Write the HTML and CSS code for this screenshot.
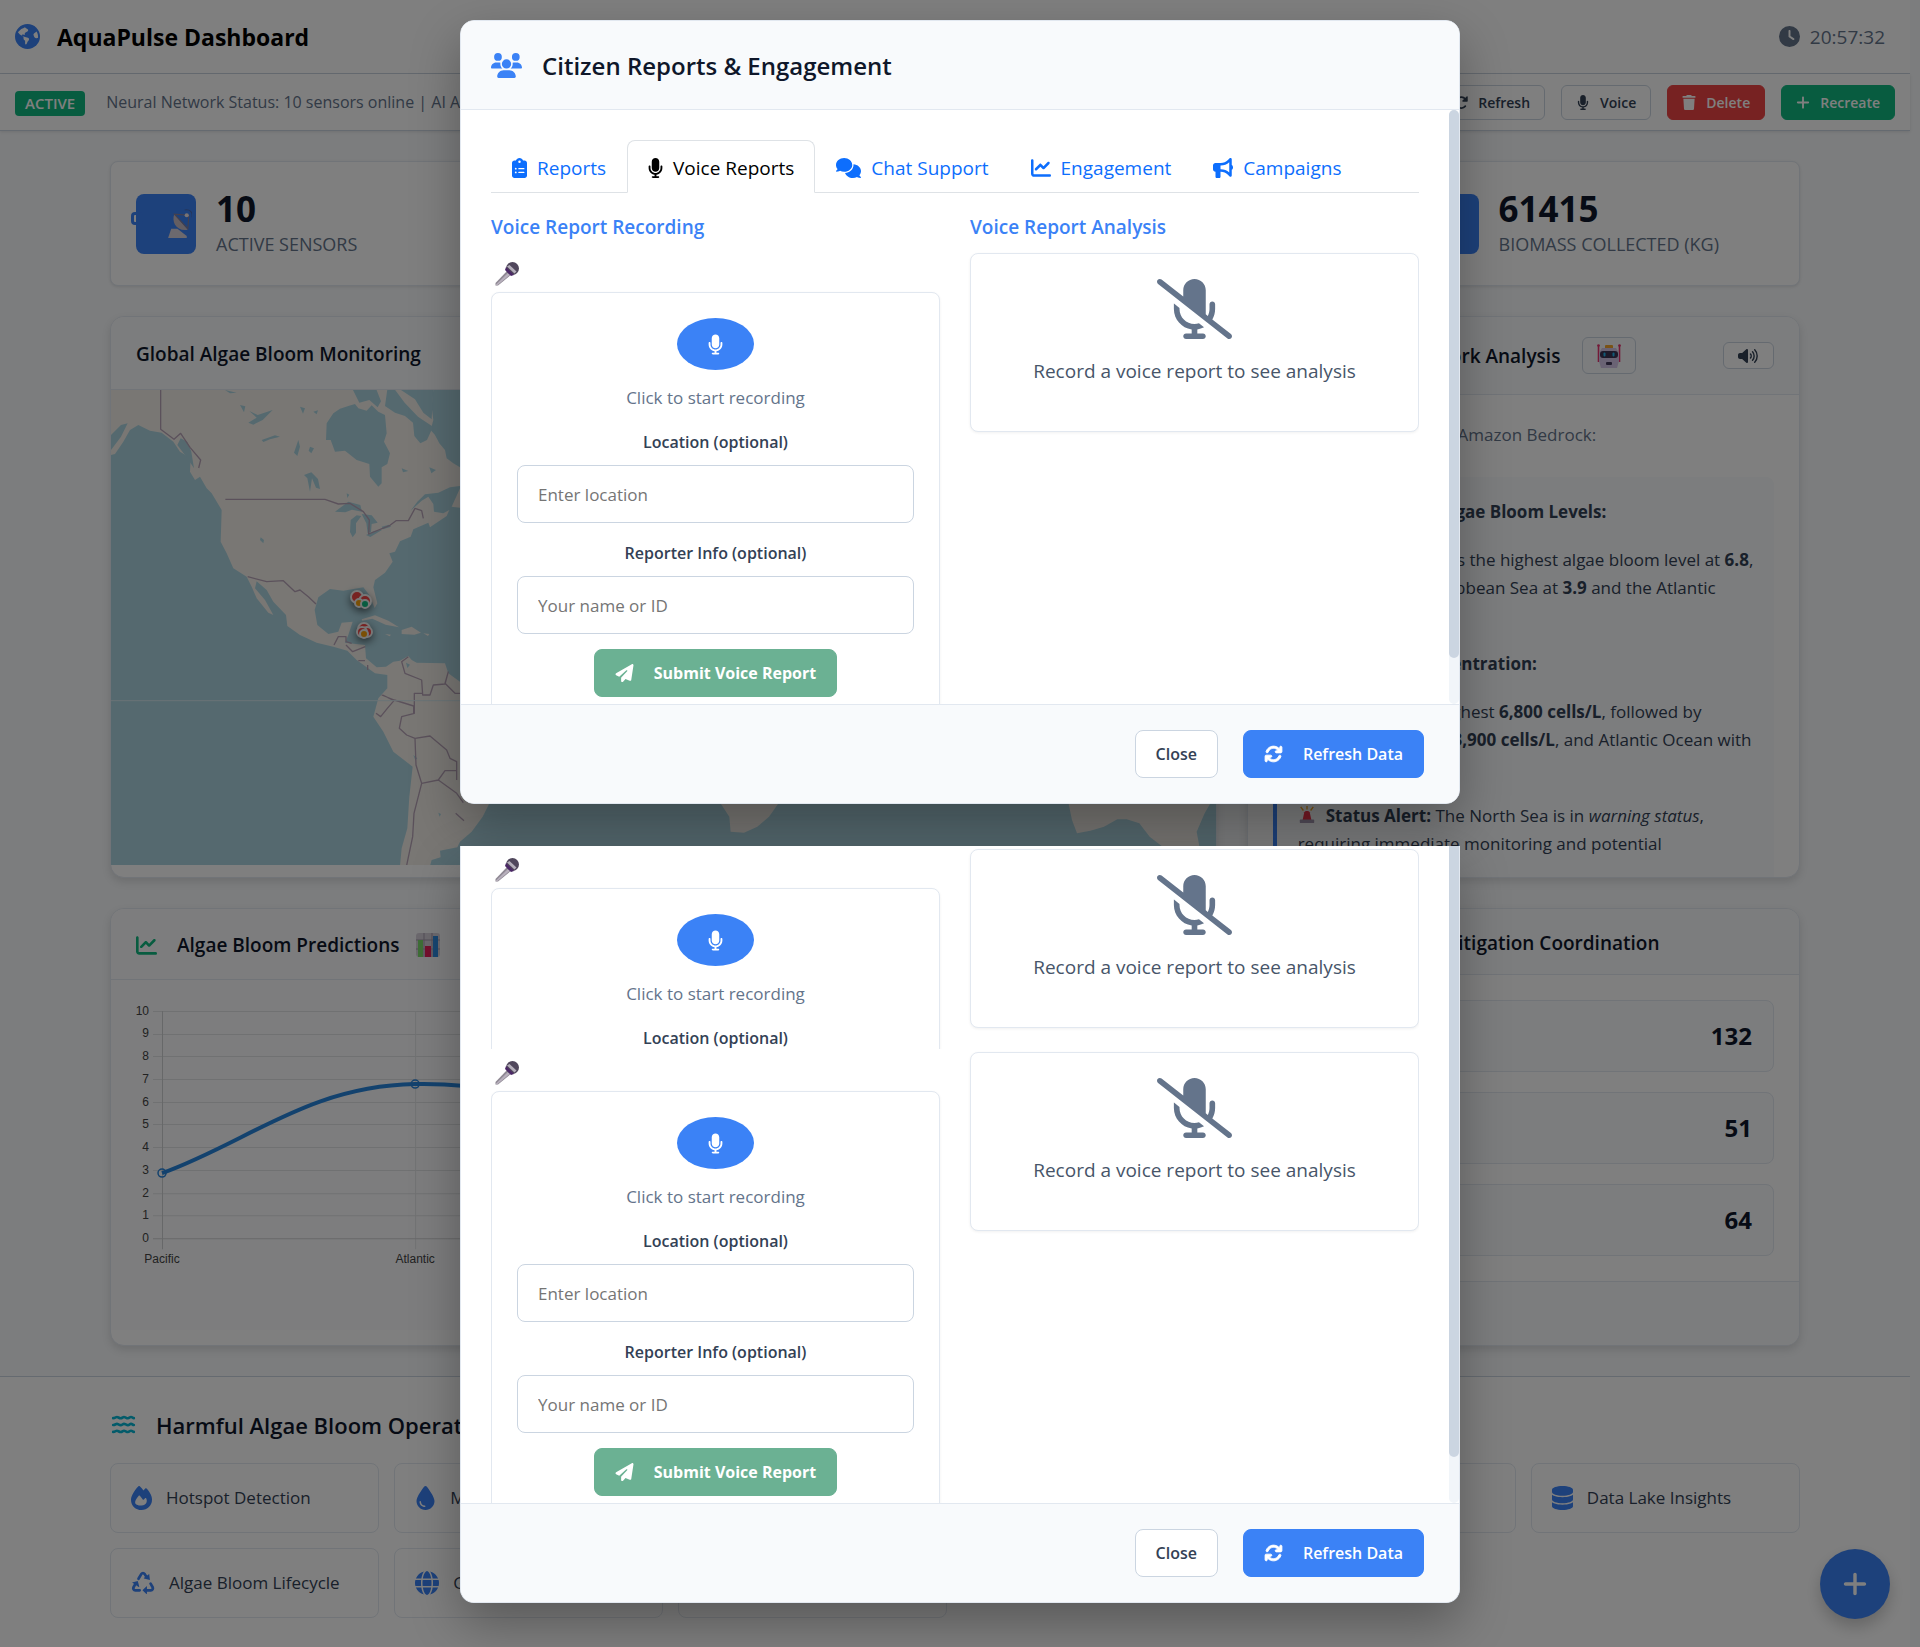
FILE: index.html
```html
<!DOCTYPE html>
<html lang="en">
<head>
<meta charset="utf-8">
<meta name="viewport" content="width=device-width, initial-scale=1">
<title>AquaPulse Dashboard</title>
<link rel="stylesheet" href="styles.css">
</head>
<body>
<svg class="defs" aria-hidden="true">
  <symbol id="i-mic" viewBox="0 0 384 512"><path d="M192 0C139 0 96 43 96 96V256c0 53 43 96 96 96s96-43 96-96V96c0-53-43-96-96-96zM64 216c0-13.3-10.7-24-24-24s-24 10.7-24 24v40c0 89.1 66.2 162.7 152 174.4V464H120c-13.3 0-24 10.7-24 24s10.7 24 24 24h72 72c13.3 0 24-10.7 24-24s-10.7-24-24-24H216V430.4c85.8-11.7 152-85.3 152-174.4V216c0-13.3-10.7-24-24-24s-24 10.7-24 24v40c0 70.7-57.3 128-128 128s-128-57.3-128-128V216z"/></symbol>
  <symbol id="i-mic-off" viewBox="0 0 640 512"><path d="M38.8 5.1C28.4-3.1 13.3-1.2 5.1 9.2S-1.2 34.7 9.2 42.9l592 464c10.4 8.2 25.5 6.3 33.7-4.1s6.3-25.5-4.1-33.7L472.1 344.7c15.2-26 23.9-56.3 23.9-88.7V216c0-13.3-10.7-24-24-24s-24 10.7-24 24v40c0 21.2-5.1 41.1-14.2 58.7L416 300.8V96c0-53-43-96-96-96s-96 43-96 96v54.3L38.8 5.1zM344 430.4c20.4-2.8 39.7-9.1 57.3-18.2l-43.1-33.9C346.1 382 333.3 384 320 384c-70.7 0-128-57.3-128-128v-8.7L144.7 210c-.5 1.9-.7 3.9-.7 6v40c0 89.1 66.2 162.7 152 174.4V464H248c-13.3 0-24 10.7-24 24s10.7 24 24 24h72 72c13.3 0 24-10.7 24-24s-10.7-24-24-24H344V430.4z"/></symbol>
  <symbol id="i-chart" viewBox="0 0 512 512"><path d="M64 64c0-17.7-14.3-32-32-32S0 46.3 0 64V400c0 44.2 35.8 80 80 80H480c17.7 0 32-14.3 32-32s-14.3-32-32-32H80c-8.8 0-16-7.2-16-16V64zm406.6 86.6c12.5-12.5 12.5-32.8 0-45.3s-32.8-12.5-45.3 0L320 210.7l-57.4-57.4c-12.5-12.5-32.8-12.5-45.3 0l-112 112c-12.5 12.5-12.5 32.8 0 45.3s32.8 12.5 45.3 0L240 221.3l57.4 57.4c12.5 12.5 32.8 12.5 45.3 0l128-128z"/></symbol>
  <symbol id="i-plane" viewBox="0 0 512 512"><path d="M498.1 5.6c10.1 7 15.4 19.1 13.5 31.2l-64 416c-1.5 9.7-7.4 18.2-16 23s-18.9 5.4-28 1.6L284 427.7l-68.5 74.1c-8.9 9.7-22.9 12.9-35.2 8.1S160 493.2 160 480V396.4c0-4 1.5-7.8 4.2-10.7L331.8 202.8c5.8-6.3 5.6-16-.4-22s-15.7-6.4-22-.7L106 360.8 17.7 316.6C7.1 311.3 .3 300.7 0 288.9s5.9-22.8 16.1-28.7l448-256c10.7-6.1 23.9-5.5 34 1.4z"/></symbol>
  <symbol id="i-plus" viewBox="0 0 448 512"><path d="M256 80c0-17.7-14.3-32-32-32s-32 14.3-32 32V224H48c-17.7 0-32 14.3-32 32s14.3 32 32 32H192V432c0 17.7 14.3 32 32 32s32-14.3 32-32V288H400c17.7 0 32-14.3 32-32s-14.3-32-32-32H256V80z"/></symbol>
  <symbol id="i-clock" viewBox="0 0 512 512"><path d="M256 0a256 256 0 1 1 0 512A256 256 0 1 1 256 0zM232 120V256c0 8 4 15.5 10.7 20l96 64c11 7.4 25.9 4.4 33.3-6.7s4.4-25.9-6.7-33.3L280 243.2V120c0-13.3-10.7-24-24-24s-24 10.7-24 24z"/></symbol>
  <symbol id="i-trash" viewBox="0 0 448 512"><path d="M135.2 17.7L128 32H32C14.3 32 0 46.3 0 64S14.3 96 32 96H416c17.7 0 32-14.3 32-32s-14.3-32-32-32H320l-7.2-14.3C307.4 6.8 296.3 0 284.2 0H163.8c-12.1 0-23.2 6.8-28.6 17.7zM416 128H32L53.2 467c1.6 25.3 22.6 45 47.9 45H346.9c25.3 0 46.3-19.7 47.9-45L416 128z"/></symbol>
  <symbol id="i-database" viewBox="0 0 448 512"><path d="M448 80v48c0 44.2-100.3 80-224 80S0 172.2 0 128V80C0 35.8 100.3 0 224 0S448 35.8 448 80zM393.2 214.7c20.8-7.4 39.9-16.9 54.8-28.6V288c0 44.2-100.3 80-224 80S0 332.2 0 288V186.1c14.9 11.8 34 21.2 54.8 28.6C99.7 230.7 159.5 240 224 240s124.3-9.3 169.2-25.3zM0 346.1c14.9 11.8 34 21.2 54.8 28.6C99.7 390.7 159.5 400 224 400s124.3-9.3 169.2-25.3c20.8-7.4 39.9-16.9 54.8-28.6V432c0 44.2-100.3 80-224 80S0 476.2 0 432V346.1z"/></symbol>
  <symbol id="i-users" viewBox="0 0 640 512"><path d="M144 0a80 80 0 1 1 0 160A80 80 0 1 1 144 0zM512 0a80 80 0 1 1 0 160A80 80 0 1 1 512 0zM0 298.7C0 239.8 47.8 192 106.7 192h42.7c15.9 0 31 3.5 44.6 9.7c-1.3 7.2-1.9 14.7-1.9 22.3c0 38.2 16.8 72.5 43.3 96c-.2 0-.4 0-.7 0H21.3C9.6 320 0 310.4 0 298.7zM405.3 320c-.2 0-.4 0-.7 0c26.6-23.5 43.3-57.8 43.3-96c0-7.6-.7-15-1.9-22.3c13.6-6.3 28.7-9.7 44.6-9.7h42.7C592.2 192 640 239.8 640 298.7c0 11.8-9.6 21.3-21.3 21.3H405.3zM224 224a96 96 0 1 1 192 0 96 96 0 1 1 -192 0zM128 485.3C128 411.7 187.7 352 261.3 352H378.7C452.3 352 512 411.7 512 485.3c0 14.7-11.9 26.7-26.7 26.7H154.7c-14.7 0-26.7-11.9-26.7-26.7z"/></symbol>
  <symbol id="i-chat" viewBox="0 0 640 512"><path d="M208 352c114.9 0 208-78.8 208-176S322.9 0 208 0S0 78.8 0 176c0 38.6 14.7 74.3 39.6 103.4c-3.5 9.4-8.7 17.7-14.2 24.7c-4.8 6.2-9.7 11-13.3 14.3c-1.8 1.6-3.3 2.9-4.3 3.7c-.5 .4-.9 .7-1.1 .8l-.2 .2 0 0 0 0C1 327.2-1.4 334.4 .8 340.9S9.1 352 16 352c21.8 0 43.8-5.6 62.1-12.5c9.2-3.5 17.8-7.4 25.3-11.4C134.1 343.3 169.8 352 208 352zM448 176c0 112.3-99.1 196.9-216.5 207C255.8 457.4 336.4 512 432 512c38.2 0 73.9-8.7 104.7-23.9c7.5 4 16 7.9 25.2 11.4c18.3 6.9 40.3 12.5 62.1 12.5c6.9 0 13.1-4.5 15.2-11.1c2.1-6.6-.2-13.8-5.8-17.9l0 0 0 0-.2-.2c-.2-.2-.6-.4-1.1-.8c-1-.8-2.5-2-4.3-3.7c-3.6-3.3-8.5-8.1-13.3-14.3c-5.5-7-10.7-15.4-14.2-24.7c24.9-29 39.6-64.7 39.6-103.4c0-92.8-84.9-168.9-192.6-175.5c.4 5.1 .6 10.3 .6 15.5z"/></symbol>
  <symbol id="i-horn" viewBox="0 0 512 512"><path d="M480 32c0-12.9-7.8-24.6-19.8-29.6s-25.7-2.2-34.9 6.9L381.7 53c-48 48-113.1 75-181 75H192 160 64c-35.3 0-64 28.7-64 64v96c0 35.3 28.7 64 64 64l0 128c0 17.7 14.3 32 32 32h64c17.7 0 32-14.3 32-32V352l8.7 0c67.9 0 133 27 181 75l43.6 43.6c9.2 9.2 22.9 11.9 34.9 6.9s19.8-16.6 19.8-29.6V300.4c18.6-8.8 32-32.5 32-60.4s-13.4-51.6-32-60.4V32zm-64 76.7V240 371.3C357.2 317.8 280.5 288 200.7 288H192V192h8.7c79.8 0 156.5-29.8 215.3-83.3z"/></symbol>
  <symbol id="i-list" viewBox="0 0 384 512"><path fill-rule="evenodd" d="M192 0c-41.8 0-77.4 26.7-90.5 64H64C28.7 64 0 92.7 0 128V448c0 35.3 28.7 64 64 64H320c35.3 0 64-28.7 64-64V128c0-35.3-28.7-64-64-64H282.5C269.4 26.7 233.8 0 192 0zm0 64a32 32 0 1 1 0 64 32 32 0 1 1 0-64zM72 272a24 24 0 1 1 48 0 24 24 0 1 1 -48 0zm104-16H304c8.8 0 16 7.2 16 16s-7.2 16-16 16H176c-8.8 0-16-7.2-16-16s7.2-16 16-16zM72 368a24 24 0 1 1 48 0 24 24 0 1 1 -48 0zm88 0c0-8.8 7.2-16 16-16H304c8.8 0 16 7.2 16 16s-7.2 16-16 16H176c-8.8 0-16-7.2-16-16z"/></symbol>
  <symbol id="i-sync" viewBox="0 0 512 512"><path d="M105.1 202.6c7.7-21.8 20.2-42.3 37.8-59.8c62.5-62.5 163.8-62.5 226.3 0L386.3 160H336c-17.7 0-32 14.3-32 32s14.3 32 32 32H463.5c0 0 0 0 0 0h.4c17.7 0 32-14.3 32-32V64c0-17.7-14.3-32-32-32s-32 14.3-32 32v51.2L414.4 97.6c-87.5-87.5-229.3-87.5-316.8 0C73.2 122 55.6 150.7 44.8 181.4c-5.9 16.7 2.9 34.9 19.5 40.8s34.9-2.9 40.8-19.5zM39 289.3c-5 1.5-9.8 4.2-13.7 8.2c-4 4-6.7 8.8-8.1 14c-.3 1.2-.6 2.5-.8 3.8c-.3 1.7-.4 3.4-.4 5.1V448c0 17.7 14.3 32 32 32s32-14.3 32-32V396.9l17.6 17.5 0 0c87.5 87.4 229.3 87.4 316.7 0c24.4-24.4 42.1-53.1 52.9-83.7c5.9-16.7-2.9-34.9-19.5-40.8s-34.9 2.9-40.8 19.5c-7.7 21.8-20.2 42.3-37.8 59.8c-62.5 62.5-163.8 62.5-226.3 0l-.1-.1L125.6 352H176c17.7 0 32-14.3 32-32s-14.3-32-32-32H48.4c-1.6 0-3.2 .1-4.8 .3s-3.1 .5-4.6 1z" stroke="currentColor" stroke-width="24"/></symbol>
  <symbol id="i-redo" viewBox="0 0 512 512"><path d="M415 130A200 200 0 1 0 415 390" fill="none" stroke="currentColor" stroke-width="64" stroke-linecap="round"/><path d="M480 24c14 0 22 10 22 24v152c0 14-10 24-24 24H326c-22 0-32-26-16-42L462 32c5-5 11-8 18-8z"/></symbol>
  <symbol id="i-volume" viewBox="0 0 640 512"><path d="M300 32c12 5 20 17 20 30v388c0 13-8 25-20 30s-26 3-35-6L132 352H64c-35 0-64-29-64-64v-64c0-35 29-64 64-64h68L265 38c9-9 23-11 35-6z"/><path d="M400 190c30 32 30 100 0 132M465 120c68 72 68 200 0 272M535 58c105 108 105 288 0 396" fill="none" stroke="currentColor" stroke-width="46" stroke-linecap="round"/></symbol>
  <symbol id="i-drop" viewBox="0 0 384 512"><path d="M192 512C86 512 0 426 0 320C0 228.8 130.2 57.7 166.6 11.7C172.6 4.2 181.5 0 191.1 0h1.8c9.6 0 18.5 4.2 24.5 11.7C253.8 57.7 384 228.8 384 320c0 106-86 192-192 192zM96 336c0-8.8-7.2-16-16-16s-16 7.2-16 16c0 61.9 50.1 112 112 112c8.8 0 16-7.2 16-16s-7.2-16-16-16c-44.2 0-80-35.8-80-80z"/></symbol>
  <symbol id="i-fire" viewBox="0 0 448 512"><path fill-rule="evenodd" d="M159 6c8-8 20-8 28 0 30 27 56 57 79 89 12-15 25-31 38-43 8-8 20-8 28 0 36 35 66 80 87 122 21 41 29 83 29 118 0 126-98 220-224 220S0 418 0 291c0-41 19-91 49-141C78 100 114 48 159 6zM226 416c25 0 48-7 69-21 42-29 54-88 28-134-4-9-16-10-23-2l-25 29c-7 8-19 7-25-1-16-21-46-59-62-79-7-8-17-8-23 0-51 61-77 99-77 142 0 41 50 66 138 66z"/></symbol>
  <symbol id="i-globe" viewBox="0 0 512 512"><path d="M352 256c0 22.2-1.2 43.6-3.3 64H163.3c-2.2-20.4-3.3-41.8-3.3-64s1.2-43.6 3.3-64H348.7c2.2 20.4 3.3 41.8 3.3 64zm28.8-64H503.9c5.3 20.5 8.1 41.9 8.1 64s-2.8 43.5-8.1 64H380.8c2.1-20.6 3.2-42 3.2-64s-1.1-43.4-3.2-64zm112.6-32H376.7c-10-63.9-29.8-117.4-55.3-151.6c78.3 20.7 142 77.5 171.9 151.6zm-149.1 0H167.7c6.1-36.4 15.5-68.6 27-94.7c10.5-23.6 22.2-40.7 33.5-51.5C239.4 3.2 248.7 0 256 0s16.6 3.2 27.8 13.8c11.3 10.8 23 27.9 33.5 51.5c11.6 26 20.9 58.2 27 94.7zm-209 0H18.6C48.6 85.9 112.2 29.1 190.6 8.4C165.1 42.6 145.3 96.1 135.3 160zM8.1 192H131.2c-2.1 20.6-3.2 42-3.2 64s1.1 43.4 3.2 64H8.1C2.8 299.5 0 278.1 0 256s2.8-43.5 8.1-64zM194.7 446.6c-11.6-26-20.9-58.2-27-94.6H344.3c-6.1 36.4-15.5 68.6-27 94.6c-10.5 23.6-22.2 40.7-33.5 51.5C272.6 508.8 263.3 512 256 512s-16.6-3.2-27.8-13.8c-11.3-10.8-23-27.9-33.5-51.5zM135.3 352c10 63.9 29.8 117.4 55.3 151.6C112.2 482.9 48.6 426.1 18.6 352H135.3zm358.1 0c-30 74.1-93.6 130.9-171.9 151.6c25.5-34.2 45.2-87.7 55.3-151.6H493.4z"/></symbol>
  <symbol id="i-earth" viewBox="0 0 512 512"><circle cx="256" cy="256" r="256"/><path fill="#fff" d="M60 170l35 40c8 10 18 12 30 18l30 16c16 8 20 20 20 36v24c0 16 10 22 20 28 12 6 12 14 12 30v44c0 18 22 22 30 6l18-44c4-10 12-18 20-26 10-10 12-20 12-32 0-14-10-22-22-26l-60-18c-20-6-30-16-50-16-16 0-22-14-12-24 10-12 24-10 36-4 14 6 26-2 22-16-6-16 4-24 16-32l44-28c14-10 12-26-2-36l-40-30c-12-10-28-10-40 0l-50 20-60 60zM395 190c-16 10-20 26-14 42l14 36c8 18 26 26 44 22l34-8c2-50-8-90-30-128z"/></symbol>
  <symbol id="i-recycle" viewBox="0 0 512 512"><g fill="none" stroke="currentColor" stroke-width="58" stroke-linecap="round" stroke-linejoin="round"><path d="M160 165l62-103c15-25 52-25 68 0l38 64"/><path d="M418 270l44 76c16 30-5 66-38 66H315"/><path d="M185 412H92c-34 0-54-38-38-66l38-66"/></g><path d="M388 62l16 130-126-30c-10-3-8-12 0-16zM340 320v160c0 12-10 14-18 6l-78-74 78-78c8-8 18-6 18-14zM22 246l122-34 32 120c2 10-6 12-12 8z"/></symbol>
  <symbol id="i-water" viewBox="0 0 576 512"><path d="M24 80c50 0 70-30 96-30s56 34 96 34 50-34 84-34 60 34 100 34 46-34 80-34 40 30 72 30M24 256c50 0 70-30 96-30s56 34 96 34 50-34 84-34 60 34 100 34 46-34 80-34 40 30 72 30M24 432c50 0 70-30 96-30s56 34 96 34 50-34 84-34 60 34 100 34 46-34 80-34 40 30 72 30" fill="none" stroke="currentColor" stroke-width="68" stroke-linecap="round"/></symbol>
  <symbol id="e-mic" viewBox="0 0 24 24"><path d="M13 8l4 4L3 23.500 0.500 23.500 0.500 21z" fill="#8f8994"/><path d="M14 10l2 2L2 23.500l-1.500-.5z" fill="#b8b0bd"/><circle cx="17.500" cy="6.500" r="6.500" fill="#50475c"/><path d="M11 5l8 8-3 1-6-6z" fill="#4b2866"/><path d="M14.500 3l7 6.500-2 2L12 4.500z" fill="#b5afbb"/></symbol>
  <symbol id="e-dish" viewBox="0 0 24 28"><path d="M1 28l3-9h6l9 7v2z" fill="#d9d2dc"/><path d="M7 5c-3 7 2 17 13 15z" fill="#c8bcc4"/><path d="M7 5l13 14 1-13zM7 5l14 1" fill="none" stroke="#8a7f96"/><circle cx="19" cy="6" r="2" fill="#f2e8e8"/><path d="M17 1c5-1 8 2 7 7" fill="none" stroke="#4a6bb5"/></symbol>
  <symbol id="e-bars" viewBox="0 0 24 24"><rect width="24" height="24" rx="3" fill="#d9d2dd"/><path d="M0 7h24M0 16h24M8 0v24M16 0v24" stroke="#a59aad" stroke-width="1"/><path d="M2 7h5v17H2z" fill="#7ddc6c"/><path d="M9 13h6v11H9z" fill="#e8215c"/><path d="M17 3h5v21h-5z" fill="#2f8be0"/></symbol>
  <symbol id="e-robot" viewBox="0 0 24 24"><path d="M1.500 1v17M22.500 1v17" stroke="#e8326e" stroke-width="1.600"/><circle cx="1.500" cy="1.500" r="1.300" fill="#e8326e"/><circle cx="22.500" cy="1.500" r="1.300" fill="#e8326e"/><rect x="8" y="1" width="8" height="4" rx="1" fill="#f4a72c"/><path d="M5 4h14l3 5v8l-2 7H4l-2-7V9z" fill="#d5c6e8"/><rect x="3" y="7" width="18" height="7" rx="3" fill="#3d3455"/><rect x="6.500" y="8.500" width="2" height="4" rx="1" fill="#23b7f0"/><rect x="15.500" y="8.500" width="2" height="4" rx="1" fill="#23b7f0"/><rect x="9" y="18" width="6" height="3" rx="1" fill="#453a5c"/></symbol>
  <symbol id="e-siren" viewBox="0 0 20 20"><path d="M5 16l2-9c1-2 5-2 6 0l2 9z" fill="#f0364f"/><rect x="2" y="15" width="16" height="4" rx="1" fill="#a79ab5"/><path d="M10 0v4M3 1l3 4M17 1l-3 4" stroke="#f7a521" stroke-width="1.500"/></symbol>
</svg>

<div class="app">
  <header class="topbar">
    <svg class="topbar-logo"><use href="#i-earth"/></svg>
    <h1>AquaPulse Dashboard</h1>
    <div class="clock"><svg><use href="#i-clock"/></svg><time>20:57:32</time></div>
  </header>

  <div class="statusbar">
    <span class="badge">ACTIVE</span>
    <span class="status-text">Neural Network Status: 10 sensors online | AI Analysis: Running</span>
    <div class="status-actions">
      <button class="btn-sm" type="button"><svg><use href="#i-redo"/></svg>Refresh</button>
      <button class="btn-sm" type="button"><svg><use href="#i-mic"/></svg>Voice</button>
      <button class="btn-sm red" type="button"><svg><use href="#i-trash"/></svg>Delete</button>
      <button class="btn-sm green" type="button"><svg><use href="#i-plus"/></svg>Recreate</button>
    </div>
  </div>

  <main class="main">
    <section class="stats">
      <article class="stat"><span class="stat-icon"><svg><use href="#e-dish"/></svg></span><div><strong>10</strong><span>ACTIVE SENSORS</span></div></article>
      <article class="stat"><span class="stat-icon"></span></article>
      <article class="stat"><span class="stat-icon"></span></article>
      <article class="stat"><span class="stat-icon"></span><div><strong>61415</strong><span>BIOMASS COLLECTED (KG)</span></div></article>
    </section>

    <section class="split">
      <article class="card">
        <div class="card-head map-head"><h2>Global Algae Bloom Monitoring</h2></div>
        <svg class="map" viewBox="0 0 1105 475" preserveAspectRatio="xMinYMin slice">
          <rect width="1105" height="475" fill="#aad3df"/>
          <g transform="translate(-11 -10) scale(.33333)">
            <g fill="#f2efe9">
              <path d="M33 28H1000L995 80 1000 120 992 150 1005 165 1018 190 1035 210 1040 235 1060 250 1080 262V318L1050 322 1015 338 975 343 952 365 932 392 965 362 985 350 1000 372 1002 395 1030 400 1048 390 1040 408 990 442 985 428 940 448 932 470 900 484 885 515 868 520 878 545 855 578 825 600 820 622 832 670 824 684 808 645 790 622 730 632 690 627 655 652 644 690 652 735 685 762 715 755 725 728 758 725 745 765 735 788 795 795 798 835 830 862 858 860 880 845 900 842 925 828 935 840 950 848 1035 850 1045 880 1080 905 1400 1000 1250 1200 1167 1272 1148 1310 1115 1355 1080 1385 1072 1402 1020 1412 1022 1432 995 1440 990 1458H900L905 1405 922 1345 928 1250 938 1160 880 1115 850 1055 820 1010 835 955 862 925 862 885 825 880 770 840 742 812 700 800 650 788 600 765 562 738 558 705 520 665 500 630 470 604 465 625 495 660 520 705 505 698 470 655 455 620 440 590 400 565 380 520 362 485 365 390 335 340 320 325 300 290 285 300 270 275 272 235 240 215 220 185 185 158 150 152 115 135 90 150 70 185 45 222 33 225Z"/>
              <path d="M785 718l40-12 40 16 32 20-40-8-40-18-30 6zM905 750l30-10 28 18-20 6-38-2zM970 760l18 2-4 6zM855 762l18 2-4 5zM1055 380l25-55v58z"/>
              <path d="M1863 1272l25 38 4 45 40 3 40-18 35-30 27-38zM2906 1272l10 48 15 40 40-8 41-12 40-22 28 0 38 12 31 40 36 28h113l-8-43 24-55 16-28z"/>
            </g>
            <g fill="#aad3df">
              <path d="M745 78L765 72 775 85 800 92 815 76 835 95 855 105 860 160 852 185 870 220 862 252 845 262 845 310 835 320 810 290 808 252 770 240 735 212 705 215 692 180 678 180 680 130 700 100 720 86Z"/>
              <path d="M758 28l20 40 30-8 25 22 10-18-14-36zM862 28h22l30 40 40 42 45 30-18 40-20 10-18-22-4-40-24-20-30-10-30-20zM900 28l45 30 25 40 25 20 5-90z"/>
              <path d="M445 128l25-15-22-20 25 12 45-15-30 30-28 14zM485 180l40-14 15 4-30 8-20 8zM595 180l5 20-8 28-10-10zM630 200l12 5-8 15-8-8zM612 285l22-8 20 20 6 30-12-4-12-28-6 40-8-40zM600 80l15 5-6 16zM640 95l14-4-4 12zM375 30l35 8-20 2zM988 262l20 8-14 10zM740 340l8 4-6 10zM420 75l16 4-4 18zM905 265l20 8-16 4z"/>
              <path d="M705 395l40-30 36 10 5 20-30-6-20 8zM752 420l18-14 14 2-16 22 0 28-10 14-8-16zM785 402l30 4 18 22-18 4-2 24-10 4-4-30zM798 465l24-12 25-4-36 22zM845 440l22-6 6 6-24 8z"/>
              <path d="M482 472l10 8-2 10-10-10zM918 848l12 6-8 10zM940 1125l12 10-6 6zM1015 1298l8 4-4 8zM262 185l-20-10-10 20 30 40 20 30-8-50zM33 165l30-30 20-5-20 40-30 40z"/>
            </g>
            <g fill="none" stroke="#b7a3b7" stroke-width="4" stroke-linejoin="round">
              <path d="M182 28V148l40 30 20-18 28 42 32 38-6 24M376 358H675L715 372 750 370 790 395 808 420 806 462 870 436 888 422H925L945 385 965 392 970 415M443 590L500 605 550 602 585 635 600 630 625 650 648 672"/>
              <path d="M702 795L715 770H738V785L755 790M738 795l20 20 38-15M775 842h20M803 855v15M848 945L882 962 862 985 842 1010 828 1000M925 830L905 845 915 880 965 900 968 945 990 945 1000 915 1035 912 1045 875M968 940H943V1000L905 1010 898 1045 920 1065 945 1075 990 1068 1040 1110 1050 1135 1070 1145V1200M945 1075L948 1155 965 1210 1015 1200 1035 1172H1072M1015 1200L1070 1240 1090 1268M965 1210L942 1300 938 1370 920 1456M1067 1300l25 22M845 945l38 15 58 18v22M1045 875l-10 35 30 30 15 0"/>
            </g>
            <path d="M33 962H3330" stroke="#d5e6ec" stroke-width="3"/>
          </g>
          <g stroke="#eee" stroke-width="2" class="pins">
            <circle cx="246" cy="207" r="6" fill="#ef4444"/><circle cx="254" cy="211" r="6" fill="#ef4444"/><circle cx="248" cy="213" r="4" fill="#f59e0b"/><circle cx="254" cy="214" r="4" fill="#10b981"/>
            <circle cx="253" cy="239" r="6" fill="#ef4444"/><circle cx="256" cy="242" r="5" fill="#ef4444"/><circle cx="251" cy="242" r="5" fill="#ef4444"/><circle cx="253" cy="244" r="4" fill="#f59e0b"/>
          </g>
        </svg>
      </article>

      <article class="card analysis">
        <div class="card-head analysis-head">
          <svg><use href="#i-globe"/></svg>
          <h2>Neural Network Analysis</h2>
          <span class="robot"><svg><use href="#e-robot"/></svg></span>
          <button class="sound" type="button" aria-label="Read aloud"><svg><use href="#i-volume"/></svg></button>
        </div>
        <p class="source">AI analysis powered by Amazon Bedrock:</p>
        <div class="report">
          <h3>State of Current Algae Bloom Levels:</h3>
          <p>The North Sea shows the highest algae bloom level at <b>6.8</b>,<br>followed by the Caribbean Sea at <b>3.9</b> and the Atlantic<br>Ocean.</p>
          <h3>Zooplankton Concentration:</h3>
          <p>North Sea has its highest <b>6,800 cells/L</b>, followed by<br>the Caribbean with <b>3,900 cells/L</b>, and Atlantic Ocean with<br>less.</p>
          <p><svg><use href="#e-siren"/></svg><b>Status Alert:</b> The North Sea is in <i>warning status</i>,<br>requiring immediate monitoring and potential</p>
        </div>
      </article>
    </section>

    <section class="split lower">
      <article class="card">
        <div class="card-head predict-head">
          <svg class="green-icon"><use href="#i-chart"/></svg>
          <h2>Algae Bloom Predictions</h2>
          <svg class="bars"><use href="#e-bars"/></svg>
        </div>
        <div class="chart-body">
        <svg class="chart" viewBox="0 0 1054 330" preserveAspectRatio="xMinYMin slice">
          <g stroke="#e1e2e4" stroke-width="1">
            <path d="M17 31.500H1050M17 54.500H1050M17 76.500H1050M17 99.500H1050M17 122.500H1050M17 144.500H1050M17 167.500H1050M17 190.500H1050M17 213.500H1050M17 235.500H1050M279.500 31V269"/>
            <path d="M26.500 31V269M17 258.500H1050" stroke="#cfd0d2"/>
          </g>
          <g class="ticks" text-anchor="end">
            <text x="13" y="35">10</text><text x="13" y="57">9</text><text x="13" y="80">8</text><text x="13" y="103">7</text><text x="13" y="126">6</text><text x="13" y="148">5</text><text x="13" y="171">4</text><text x="13" y="194">3</text><text x="13" y="217">2</text><text x="13" y="239">1</text><text x="13" y="262">0</text>
          </g>
          <g class="ticks" text-anchor="middle"><text x="26" y="283">Pacific</text><text x="279" y="283">Atlantic</text></g>
          <path d="M26 193C112 162 172 106 279 104C380 102 450 135 533 150" fill="none" stroke="#2784dc" stroke-width="4"/>
          <g fill="none" stroke="#2784dc" stroke-width="1.500"><circle cx="26" cy="193" r="4"/><circle cx="279" cy="104" r="4"/></g>
        </svg>
        </div>
      </article>

      <article class="card">
        <div class="card-head mitigation-head">
          <svg><use href="#i-recycle"/></svg>
          <h2>Automated Mitigation Coordination</h2>
        </div>
        <ul class="counts"><li>132</li><li>51</li><li>64</li></ul>
        <div class="card-foot"></div>
      </article>
    </section>
  </main>

  <section class="ops">
    <h2><svg><use href="#i-water"/></svg>Harmful Algae Bloom Operations</h2>
    <nav class="ops-grid">
      <a href="#hotspot"><svg><use href="#i-fire"/></svg>Hotspot Detection</a>
      <a href="#microplastics"><svg><use href="#i-drop"/></svg>Microplastics</a>
      <a href="#ops3" aria-label="Forecasts"></a>
      <a href="#ops4" aria-label="Alerts"></a>
      <a href="#ops5" aria-label="Sensors"></a>
      <a href="#datalake"><svg><use href="#i-database"/></svg>Data Lake Insights</a>
      <a href="#lifecycle"><svg class="wide"><use href="#i-recycle"/></svg>Algae Bloom Lifecycle</a>
      <a href="#global"><svg class="wide"><use href="#i-globe"/></svg>Global Network</a>
      <a href="#ops9" aria-label="History"></a>
    </nav>
  </section>
  <button class="fab" type="button" aria-label="Add"><svg><use href="#i-plus"/></svg></button>

  <div class="overlay">
    <section class="modal" role="dialog" aria-labelledby="dlg-title">
      <header class="modal-head"><svg><use href="#i-users"/></svg><h2 id="dlg-title">Citizen Reports &amp; Engagement</h2></header>
      <div class="modal-body">
        <div class="scroll-content">
          <nav class="tabs">
            <a href="#reports"><svg class="narrow"><use href="#i-list"/></svg>Reports</a>
            <a class="active" href="#voice"><svg class="narrow"><use href="#i-mic"/></svg>Voice Reports</a>
            <a href="#chat"><svg class="wide"><use href="#i-chat"/></svg>Chat Support</a>
            <a href="#engagement"><svg><use href="#i-chart"/></svg>Engagement</a>
            <a href="#campaigns"><svg><use href="#i-horn"/></svg>Campaigns</a>
          </nav>
          <div class="pane-titles"><h3>Voice Report Recording</h3><h3>Voice Report Analysis</h3></div>
          <div class="panes">
            <div>
              <svg class="emoji-mic"><use href="#e-mic"/></svg>
              <form class="panel recorder">
                <button class="record" type="button" aria-label="Start recording"><svg><use href="#i-mic"/></svg></button>
                <p>Click to start recording</p>
                <label for="loc1">Location (optional)</label>
                <input id="loc1" type="text" placeholder="Enter location">
                <label for="rep1">Reporter Info (optional)</label>
                <input id="rep1" type="text" placeholder="Your name or ID">
                <button class="btn submit" type="button"><svg><use href="#i-plane"/></svg>Submit Voice Report</button>
              </form>
            </div>
            <div class="panel result"><svg><use href="#i-mic-off"/></svg><p>Record a voice report to see analysis</p></div>
          </div>
        </div>
        <div class="track"><div class="thumb thumb-first"></div></div>
      </div>
      <footer class="modal-foot"><button class="btn plain" type="button">Close</button><button class="btn primary" type="button"><svg><use href="#i-sync"/></svg>Refresh Data</button></footer>
    </section>

    <section class="modal continued" aria-label="Voice reports, continued">
      <div class="modal-body">
        <div class="scroll-content">
          <div class="panes excerpt">
            <div>
              <svg class="emoji-mic"><use href="#e-mic"/></svg>
              <form class="panel recorder">
                <button class="record" type="button" aria-label="Start recording"><svg><use href="#i-mic"/></svg></button>
                <p>Click to start recording</p>
                <p class="field-name">Location (optional)</p>
              </form>
            </div>
            <div class="panel result"><svg><use href="#i-mic-off"/></svg><p>Record a voice report to see analysis</p></div>
          </div>
          <div class="panes">
            <div>
              <svg class="emoji-mic"><use href="#e-mic"/></svg>
              <form class="panel recorder">
                <button class="record" type="button" aria-label="Start recording"><svg><use href="#i-mic"/></svg></button>
                <p>Click to start recording</p>
                <label for="loc2">Location (optional)</label>
                <input id="loc2" type="text" placeholder="Enter location">
                <label for="rep2">Reporter Info (optional)</label>
                <input id="rep2" type="text" placeholder="Your name or ID">
                <button class="btn submit" type="button"><svg><use href="#i-plane"/></svg>Submit Voice Report</button>
              </form>
            </div>
            <div class="panel result"><svg><use href="#i-mic-off"/></svg><p>Record a voice report to see analysis</p></div>
          </div>
        </div>
        <div class="track"><div class="thumb thumb-second"></div></div>
      </div>
      <footer class="modal-foot"><button class="btn plain" type="button">Close</button><button class="btn primary" type="button"><svg><use href="#i-sync"/></svg>Refresh Data</button></footer>
    </section>
  </div>
</div>
</body>
</html>
```

FILE: styles.css
```css
*, *::before, *::after { box-sizing: border-box; }
body {
  margin: 0;
  background: #f1f5f9;
  color: #334155;
  font-family: "Open Sans", "Noto Sans", sans-serif;
  font-size: 17px;
  line-height: 24px;
}
h1, h2, h3, p, ul { margin: 0; padding: 0; font-weight: 400; }
button, input { font-family: inherit; }
a { text-decoration: none; color: inherit; }
svg { fill: currentColor; flex: none; display: block; }
.defs { position: absolute; width: 0; height: 0; }

.app { position: relative; min-height: 100vh; padding-right: 10px; background: #f8fafc; display: flex; flex-direction: column; }

/* header */
.topbar { height: 74px; padding: 0 25px 0 15px; background: #fff; border-bottom: 1px solid #cbd5e1; display: flex; align-items: center; gap: 17px; }
.topbar-logo { width: 25px; height: 25px; color: #3b82f6; }
.topbar h1 { font-size: 23px; font-weight: 700; color: #000; line-height: 32px; }
.clock { margin-left: auto; display: flex; align-items: center; gap: 10px; font-size: 19px; color: #64748b; }
.clock svg { width: 21px; height: 21px; }

.statusbar { height: 57px; padding: 0 15px; background: #fff; border-bottom: 1px solid #cbd5e1; box-shadow: 0 1px 3px rgba(0,0,0,.1); display: flex; align-items: center; }
.badge { margin-top: 2px; background: #10b981; color: #fff; font-size: 15px; font-weight: 600; line-height: 25px; padding: 0 10px; border-radius: 4px; }
.status-text { margin-left: 21px; color: #64748b; font-size: 16px; }
.status-actions { margin-left: auto; display: flex; gap: 16px; }
.btn-sm { height: 35px; padding: 0 14px; display: flex; align-items: center; gap: 10px; border: 1px solid #cbd5e1; border-radius: 6px; background: #fff; color: #334155; font-size: 14px; font-weight: 600; }
.btn-sm svg { width: 14px; height: 15px; }
.btn-sm.red { background: #ef4444; border-color: #ef4444; color: #fff; }
.btn-sm.green { background: #10b981; border-color: #10b981; color: #fff; }

/* dashboard */
.main { padding: 30px 110px; display: flex; flex-direction: column; gap: 30px; }
.stats { display: grid; grid-template-columns: repeat(4, 1fr); gap: 20px; }
.stat { height: 125px; padding: 0 25px; display: flex; align-items: center; gap: 20px; background: #fff; border: 1px solid #e2e8f0; border-radius: 8px; box-shadow: 0 1px 3px rgba(0,0,0,.1); }
.stat-icon { position: relative; width: 60px; height: 60px; border-radius: 8px; background: #3b82f6; display: flex; align-items: center; justify-content: flex-end; padding-right: 4px; }
.stat-icon::before { content: ""; position: absolute; left: -5px; top: 18px; width: 12px; height: 13px; border: 3px solid #3b82f6; border-radius: 4px; }
.stat-icon svg { width: 25px; height: 29px; }
.stat strong { display: block; color: #0f172a; font-size: 35px; font-weight: 700; line-height: 40px; }
.stat div span { display: block; color: #64748b; font-size: 18px; font-weight: 500; line-height: 30px; }

.split { display: grid; grid-template-columns: 2fr 1fr; gap: 30px; height: 562px; }
.split.lower { height: 438px; }
.card { background: #fff; border: 1px solid #e2e8f0; border-radius: 14px; box-shadow: 0 4px 8px rgba(0,0,0,.12); overflow: hidden; min-width: 0; }
.card-head { display: flex; align-items: center; padding: 2px 25px 0; background: #f8fafc; border-bottom: 1px solid #e2e8f0; white-space: nowrap; }
.card-head h2 { font-size: 19px; font-weight: 600; color: #0f172a; }
.map-head { height: 73px; }
.map { width: 100%; height: 475px; }
.pins { filter: drop-shadow(0 3px 4px rgba(0,0,0,.6)); }

.analysis-head { height: 78px; padding-top: 0; }
.analysis-head > svg { width: 21px; height: 21px; margin-right: 40px; }
.robot { margin-left: 22px; width: 54px; height: 37px; border: 1px solid #cbd5e1; border-radius: 6px; display: flex; align-items: center; justify-content: center; }
.robot svg { width: 24px; height: 24px; }
.sound { margin-left: auto; width: 51px; height: 27px; padding: 0; display: flex; align-items: center; justify-content: center; background: #fff; border: 1px solid #cbd5e1; border-radius: 6px; color: #334155; }
.sound svg { width: 20px; height: 16px; }
.source { padding: 27px 25px 29px; color: #64748b; line-height: 26px; }
.report { height: 420px; margin: 0 25px; padding: 21px; background: #f8fafc; border-left: 4px solid #3b82f6; border-radius: 8px; line-height: 28px; white-space: nowrap; }
.report h3 { font-size: 17px; font-weight: 700; margin-bottom: 20px; }
.report p { margin-bottom: 20px; }
.report svg { display: inline-block; vertical-align: -2px; width: 18px; height: 18px; margin-right: 10px; }

.predict-head { height: 71px; gap: 20px; background: #fafbfc; }
.green-icon { width: 21px; height: 21px; color: #10b981; }
.bars { width: 24px; height: 24px; }
.predict-head .bars { margin-left: -4px; }
.chart-body { height: 350px; padding: 0 25px; background: #fafbfc; }
.chart { width: 100%; height: 330px; }
.ticks { font: 12px "Liberation Sans", Arial, sans-serif; fill: #444; }
.mitigation-head { height: 66px; gap: 40px; }
.mitigation-head svg { width: 20px; height: 20px; }
.counts { list-style: none; padding: 25px; display: flex; flex-direction: column; gap: 20px; }
.counts li { height: 72px; padding: 0 21px; background: #f8fafc; border: 1px solid #e2e8f0; border-radius: 8px; display: flex; align-items: center; justify-content: flex-end; font-size: 24px; font-weight: 700; color: #0f172a; }
.card-foot { height: 70px; background: #f8fafc; border-top: 1px solid #e2e8f0; }

.ops { flex: 1; padding: 30px 110px; background: #fff; border-top: 1px solid #cbd5e1; }
.ops h2 { display: flex; align-items: center; gap: 19px; height: 36px; margin-bottom: 20px; font-size: 22px; font-weight: 600; color: #0f172a; }
.ops h2 svg { width: 27px; height: 20px; color: #06b6d4; }
.ops-grid { display: grid; grid-template-columns: repeat(6, 1fr); gap: 15px; }
.ops-grid a { height: 70px; padding: 0 20px; border: 1px solid #e2e8f0; border-radius: 8px; display: flex; align-items: center; gap: 14px; overflow: hidden; white-space: nowrap; }
.ops-grid svg { width: 21px; height: 24px; color: #3b82f6; }
.ops-grid svg.wide { width: 24px; }
.fab { position: absolute; right: 30px; bottom: 29px; width: 70px; height: 70px; border: 0; border-radius: 50%; background: #3b82f6; color: #fff; display: flex; align-items: center; justify-content: center; box-shadow: 0 8px 16px rgba(0,0,0,.2); }
.fab svg { width: 24px; height: 28px; }

/* dialogs */
.overlay { position: absolute; inset: 0; background: rgba(0,0,0,.5); padding: 20px; display: flex; flex-direction: column; align-items: center; gap: 42px; }
.modal { width: 100%; max-width: 1000px; background: #fff; border: 1px solid #e2e8f0; border-radius: 14px; box-shadow: 0 20px 50px rgba(0,0,0,.3); overflow: hidden; }
.modal.continued { border-top: 0; border-radius: 0 0 14px 14px; }
.modal-head { height: 89px; padding: 0 30px; display: flex; align-items: center; gap: 20px; background: #f8fafc; border-bottom: 1px solid #e2e8f0; }
.modal-head svg { width: 31px; height: 25px; color: #3b82f6; }
.modal-head h2 { font-size: 24px; font-weight: 600; line-height: 32px; padding-top: 2px; color: #0f172a; }
.modal-body { display: flex; }
.scroll-content { flex: 1; padding: 0 30px; min-width: 0; }
.track { width: 10px; background: #f1f5f9; border-radius: 5px; }
.thumb { background: #cbd5e1; border-radius: 5px; }
.thumb-first { height: 548px; }
.thumb-second { height: 611px; border-radius: 0 0 5px 5px; }

.tabs { margin-top: 30px; display: flex; border-bottom: 1px solid #dee2e6; }
.tabs a { height: 53px; margin-bottom: -1px; padding: 2px 20px 0; display: flex; align-items: center; gap: 10px; font-size: 19px; color: #0d6efd; border: 1px solid transparent; border-radius: 8px 8px 0 0; white-space: nowrap; }
.tabs .active { color: #000; background: #fff; border-color: #dee2e6; border-bottom-color: #fff; }
.tabs svg { width: 20px; height: 20px; }
.tabs svg.narrow { width: 15px; }
.tabs svg.wide { width: 25px; }

.pane-titles { display: grid; grid-template-columns: 1fr 1fr; gap: 30px; padding: 20px 0 9px; }
.pane-titles h3 { font-size: 19px; font-weight: 600; line-height: 28px; color: #3b82f6; }
.panes { display: grid; grid-template-columns: 1fr 1fr; align-items: start; gap: 30px; height: 454px; overflow: hidden; }
.panes.excerpt { height: 203px; }
.emoji-mic { width: 24px; height: 24px; margin: 12px 0 6px 4px; }
.panel { border: 1px solid #e2e8f0; border-radius: 8px; box-shadow: 0 1px 3px rgba(0,0,0,.06); background: #fff; }
.recorder { height: 460px; padding: 25px; display: flex; flex-direction: column; align-items: center; }
.record { width: 77px; height: 52px; padding: 0; border: 0; border-radius: 50%; background: #3b82f6; color: #fff; display: flex; align-items: center; justify-content: center; }
.record svg { width: 15px; height: 21px; }
.recorder p { margin: 16px 0 17px; color: #64748b; line-height: 24px; }
.recorder label, .recorder .field-name { display: block; margin: 3px 0 11px; font-size: 16px; font-weight: 600; line-height: 24px; color: #334155; }
.recorder input { width: 100%; height: 58px; padding: 0 20px; margin-bottom: 15px; border: 1px solid #cbd5e1; border-radius: 8px; background: #fff; font-size: 17px; color: #334155; }
.recorder input::placeholder { color: #757575; opacity: 1; }
.result { margin-top: 3px; height: 179px; padding: 25px; display: flex; flex-direction: column; align-items: center; color: #475569; font-size: 19px; }
.result svg { width: 75px; height: 60px; color: #64748b; margin-bottom: 20px; }

.btn { height: 48px; padding: 0 20px; display: flex; align-items: center; gap: 20px; border: 1px solid #cbd5e1; border-radius: 8px; font-size: 16px; font-weight: 600; white-space: nowrap; }
.btn svg { width: 19px; height: 18px; }
.submit { background: #6bb193; border-color: #6bb193; color: #fff; font-weight: 700; }
.plain { background: #fff; color: #334155; }
.primary { background: #3b82f6; border-color: #3b82f6; color: #fff; }
.modal-foot { height: 99px; padding: 0 35px; display: flex; align-items: center; justify-content: flex-end; gap: 25px; background: #f8fafc; border-top: 1px solid #e2e8f0; }
```
